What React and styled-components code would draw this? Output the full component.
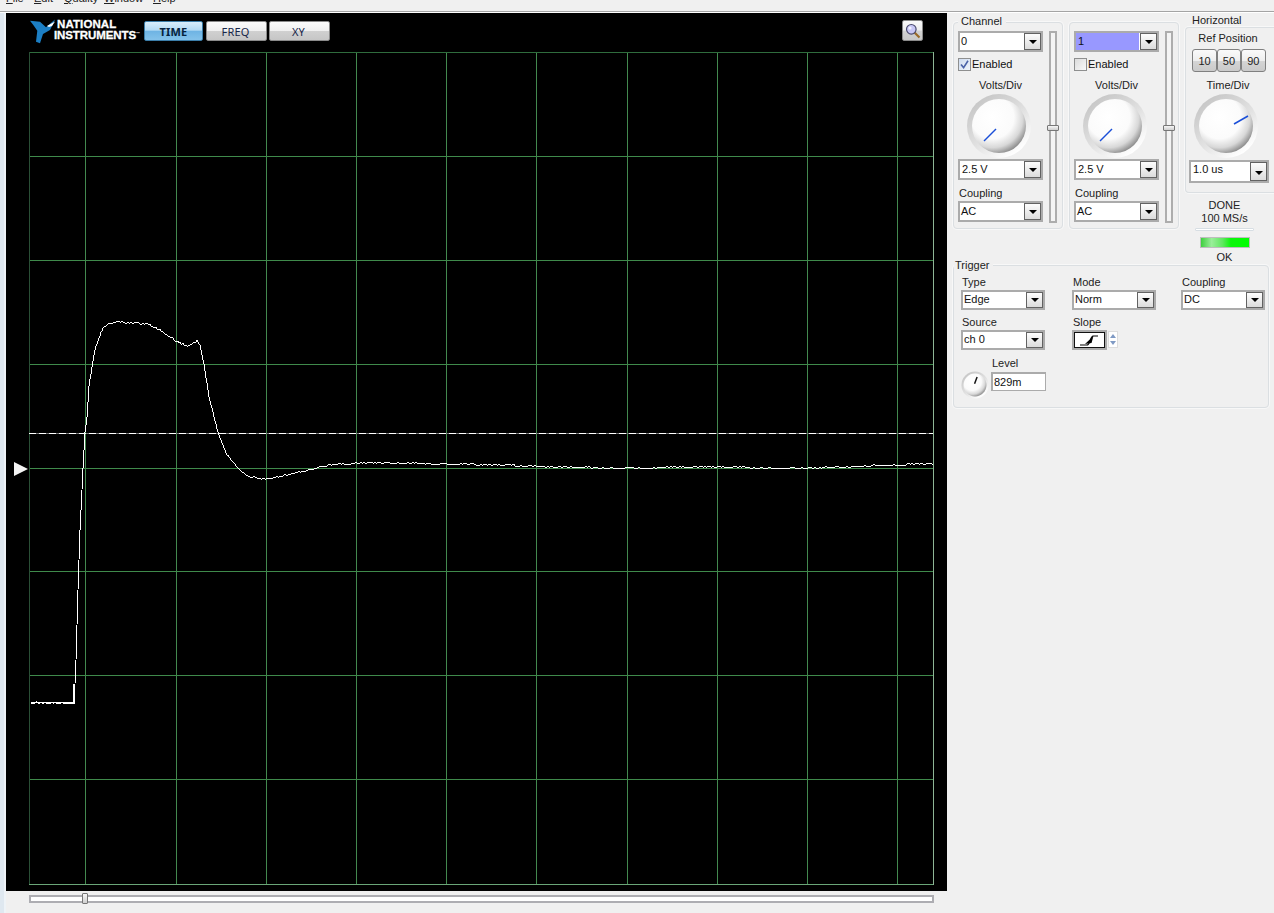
import React from "react";
import styled, { createGlobalStyle } from "styled-components";

const Global = createGlobalStyle`
  html, body { margin: 0; padding: 0; background: #f0f0f0; overflow: hidden; }
  #root { width: 1274px; height: 913px; }
  * { box-sizing: border-box; }
`;

const Page = styled.div`
  width: 1274px; height: 913px; overflow: hidden; display: flex; flex-direction: column;
  font-family: "Liberation Sans", Arial, sans-serif; font-size: 11px; color: #111; background: #f0f0f0;
`;
const MenuBar = styled.div`
  height: 13px; flex: none; overflow: hidden; display: flex; padding-left: 6px;
  border-bottom: 1px solid #fff; box-shadow: inset 0 -1px 0 #a4a4a4; background: #f0f0f0;
`;
const MenuItem = styled.span`
  width: ${p => p.$w}px; margin-top: -9px; line-height: 15px; height: 15px; font-size: 11px; color: #222; flex: none;
  &::first-letter { text-decoration: underline; }
`;
const Body = styled.div`display: flex; flex: 1; min-height: 0;`;
const Strip = styled.div`width: 6px; flex: none; background: linear-gradient(90deg, #dfe8f0 0 4px, #eef3f7 4px);`;
const LeftColumn = styled.div`width: 941px; flex: none; display: flex; flex-direction: column;`;
const Scope = styled.div`height: 878px; background: #000; display: flex; flex-direction: column;`;
const Toolbar = styled.div`height: 39px; flex: none; display: flex; align-items: flex-start; padding: 8px 24px 0 24px;`;
const Logo = styled.div`width: 114px; height: 24px; flex: none; position: relative; margin-top: -2px; display: flex; padding-left: 24px;`;
const LogoMark = styled.svg`position: absolute; left: 0; top: 0;`;
const LogoText = styled.div`
  color: #fff; font-family: "Liberation Sans", Arial, sans-serif; font-weight: 700; line-height: 10px; white-space: nowrap;
`;
const LogoLine = styled.div`
  font-size: ${p => p.$s}px; letter-spacing: ${p => p.$ls}px; margin-left: ${p => p.$ml || 0}px; -webkit-text-stroke: 0.3px #fff;
  & sup { font-size: 4px; vertical-align: 4px; letter-spacing: 0; -webkit-text-stroke: 0; }
`;
const TabButton = styled.div`
  width: ${p => p.$w}px; height: 20px; flex: none; margin-right: ${p => p.$mr}px; display: flex; align-items: center; justify-content: center;
  border-radius: 2px; font-family: "Noto Sans", sans-serif; font-size: 11px; letter-spacing: 0.2px;
  padding: 1px ${p => (p.$active ? 0 : 2)}px 0 0;
  border: 1px solid ${p => (p.$active ? "#3b7da8" : "#8a8a8a")};
  color: ${p => (p.$active ? "#06223c" : "#17264a")};
  font-weight: ${p => (p.$active ? 700 : 400)};
  background: ${p => (p.$active
    ? "linear-gradient(180deg, #d9eefb 0%, #b3daf3 45%, #6fb4e4 52%, #84c2ea 100%)"
    : "linear-gradient(180deg, #fbfbfb 0%, #f0f0f0 48%, #d0d0d0 52%, #c6c6c6 100%)")};
`;
const ZoomButton = styled.div`
  width: 21px; height: 21px; margin-left: auto; margin-top: -1px; border: 1px solid #8a8a8a; border-radius: 2px;
  background: linear-gradient(180deg, #fafafa 0%, #eee 48%, #d2d2d2 52%, #c8c8c8 100%);
  display: flex; align-items: center; justify-content: center;
`;
const PlotSvg = styled.svg`display: block; flex: none;`;
const BottomBar = styled.div`height: 22px; flex: none; padding: 4px 13px 0 23px;`;
const HTrack = styled.div`
  position: relative; height: 8px; border: 2px solid #adadb2; background: #fff;
`;
const HThumb = styled.div`
  position: absolute; left: 51px; top: -4px; width: 6px; height: 11px; border: 1px solid #777; border-radius: 1px;
  background: linear-gradient(180deg, #f6f6f6, #cfcfcf);
`;
const Side = styled.div`width: 327px; flex: none; padding-left: 6px; display: flex; flex-direction: column;`;
const TopRow = styled.div`display: flex; gap: 6px; height: 251px; flex: none;`;
const Group = styled.div`
  position: relative; width: 110px; height: 207px; margin-top: 9px; flex: none; display: flex; gap: 6px;
  padding: 8px 0 0 4px; border: 1px solid #dbdfe2; border-radius: 4px; box-shadow: 0 0 0 1px #f8f8f8;
`;
const Legend = styled.span`
  position: absolute; left: ${p => p.$l}px; top: ${p => p.$t ?? -8}px; line-height: 13px; padding: 0 4px 0 ${p => p.$pl ?? 3}px; background: #f0f0f0; color: #222;
`;
const GroupColumn = styled.div`width: 85px; flex: none; display: flex; flex-direction: column;`;
const VTrack = styled.div`
  position: relative; width: 8px; height: 192px; flex: none; border: 2px solid #adadad; background: #f4f4f4;
`;
const VThumb = styled.div`
  position: absolute; left: -4px; top: 92px; width: 12px; height: 6px; border: 1px solid #777; border-radius: 1px;
  background: linear-gradient(180deg, #f6f6f6, #cfcfcf);
`;
const DropBox = styled.div`
  width: ${p => p.$w}px; height: ${p => p.$h}px; flex: none; display: flex; align-items: stretch; justify-content: space-between;
  margin-left: ${p => p.$ml || 0}px;
  border: 2px solid #ababab; background: #fff; font-size: 11px; line-height: 1; color: #111;
`;
const DropValue = styled.div`
  flex: 1; display: flex; align-items: center; padding: 0 0 ${p => p.$pb ?? 1}px ${p => p.$pl ?? 0}px; margin-right: 1px; background: ${p => p.$hl ? "#9898ff" : "#fff"};
`;
const DropArrow = styled.div`
  width: 17px; flex: none; display: flex; align-items: flex-end; justify-content: center; padding-bottom: 5px;
  border: 1px solid #626262; background: linear-gradient(180deg, #fdfdfd 0%, #dcdcdc 100%);
  &::after { content: ""; border-left: 4px solid transparent; border-right: 4px solid transparent; border-top: 4px solid #000; }
`;
const CheckRow = styled.div`height: 13px; margin-top: 6px; display: flex; align-items: center; gap: 1px; line-height: 13px;`;
const CheckBox = styled.div`
  width: 13px; height: 13px; flex: none; border: 1px solid #8e8f8f; outline: 0;
  background: ${p => p.$on ? "linear-gradient(135deg, #cfdcf0, #eef3fa)" : "linear-gradient(135deg, #dcdcdc, #f8f8f8)"};
  display: flex; align-items: center; justify-content: center;
`;
const CenterLabel = styled.div`height: 14px; line-height: 14px; margin-top: ${p => p.$mt}px; text-align: center; color: #222;`;
const PlainLabel = styled.div`height: 15px; line-height: 14px; margin-top: ${p => p.$mt || 0}px; margin-left: ${p => p.$ml || 0}px; color: #222;`;
const KnobFrame = styled.div`
  height: ${p => p.$h ?? 66}px; flex: none; display: flex; justify-content: center; align-self: ${p => p.$self || "stretch"};
  margin: ${p => p.$mt || 0}px ${p => p.$mr || 0}px ${p => p.$mb || 0}px 0;
`;
const HorizontalColumn = styled.div`width: 89px; flex: none; display: flex; flex-direction: column;`;
const HorizontalTitle = styled.div`height: 14px; line-height: 15px; padding-left: 7px; color: #222; flex: none;`;
const HBox = styled.div`
  height: 166px; flex: none; padding: 4px 4px 0 0; display: flex; flex-direction: column; align-items: center;
  border: 1px solid #dbdfe2; border-right: 0; border-radius: 4px 0 0 4px; box-shadow: 0 0 0 1px #f8f8f8;
`;
const RefButtons = styled.div`display: flex; margin-top: 4px; margin-left: 2px;`;
const RefButton = styled.div`
  width: 24.4px; height: 23px; border: 1px solid #808080; border-radius: 3px; display: flex; align-items: center; justify-content: center;
  background: linear-gradient(180deg, #fafafa 0%, #eee 50%, #d4d4d4 55%, #cacaca 100%); font-size: 11px; color: #222;
`;
const Status = styled.div`display: flex; flex-direction: column; align-items: center; padding: 6px 10px 0 0; text-align: center; line-height: 13px; color: #222;`;
const ThinBar = styled.div`width: 59px; height: 3px; margin-top: 3px; border: 1px solid #d7dee3; background: #fff; border-radius: 1px;`;
const Led = styled.div`
  width: 50px; height: 11px; margin-top: 6px; border: 1px solid #bdbdbd;
  background: linear-gradient(90deg, #3fcf3f 0%, #9aee9a 22%, #5fe85f 45%, #0cf50c 62%, #00ff00 100%);
`;
const OkText = styled.div`margin-top: 2px; line-height: 14px;`;
const Trigger = styled.div`
  position: relative; width: 316px; height: 143px; margin-top: 1px; flex: none; padding: 9px 0 0 7px;
  display: grid; grid-template-columns: 111px 109px 84px; grid-auto-rows: 35px 35px 44px; row-gap: 5px;
  border: 1px solid #dbdfe2; border-radius: 4px; box-shadow: 0 0 0 1px #f8f8f8;
`;
const Field = styled.div`display: flex; flex-direction: column;`;
const SlopeRow = styled.div`display: flex; align-items: flex-start; gap: 1px;`;
const SlopeBox = styled.div`
  width: 35px; height: 20px; border: 2px solid #ababab; background: #fff; flex: none;
  display: flex; align-items: stretch;
`;
const SlopeInner = styled.div`flex: 1; border: 1px solid #111; display: flex; align-items: center; justify-content: center;`;
const Spinner = styled.div`width: 10px; height: 17px; display: flex; flex-direction: column; border: 1px solid #ddd; background: #fff; margin-top: 1px;`;
const SpinPart = styled.div`
  flex: 1; display: flex; align-items: center; justify-content: center;
  &::after { content: ""; border-left: 3px solid transparent; border-right: 3px solid transparent;
    ${p => p.$down ? "border-top: 4px solid #7f9ac4;" : "border-bottom: 4px solid #7f9ac4;"} }
`;
const LevelRow = styled.div`grid-column: 1 / 3; display: flex; gap: 2px; height: 44px;`;
const LevelColumn = styled.div`display: flex; flex-direction: column; align-items: flex-start;`;
const LevelLabel = styled.div`height: 16px; padding-top: 1px; line-height: 14px; margin-left: 1px; color: #222;`;
const NumBox = styled.div`
  width: 55px; height: 19px; margin-top: 1px; border: 1px solid #ababab; border-width: 2px 1px 1px 2px; background: #fff; padding-left: 1px; display: flex; align-items: center; font-size: 11px;
`;

function Dropdown({ value, w = 85, h = 21, hl, pl, ml, pb }) {
  return (
    <DropBox $w={w} $h={h} $ml={ml}>
      <DropValue $hl={hl} $pl={pl} $pb={pb}>{value}</DropValue>
      <DropArrow />
    </DropBox>
  );
}

let knobId = 0;
function Knob({ size = 66, needle, color = "#1a4fd8", weight = 1.5 }) {
  const id = React.useMemo(() => `k${knobId++}`, []);
  return (
    <svg width={size} height={size} viewBox="0 0 66 66">
      <defs>
        <radialGradient id={`${id}s`} cx="38%" cy="34%" r="72%">
          <stop offset="0" stopColor="#ffffff" />
          <stop offset="0.55" stopColor="#fbfbfb" />
          <stop offset="0.78" stopColor="#d8d8d8" />
          <stop offset="1" stopColor="#7e7e7e" />
        </radialGradient>
        <linearGradient id={`${id}r`} x1="0.2" y1="0.1" x2="0.8" y2="0.9">
          <stop offset="0" stopColor="#c8c8c8" />
          <stop offset="0.55" stopColor="#e2e2e2" />
          <stop offset="1" stopColor="#ffffff" />
        </linearGradient>
      </defs>
      <circle cx="33" cy="33" r="32" fill={`url(#${id}r)`} />
      <circle cx="33" cy="33" r="27" fill={`url(#${id}s)`} />
      <line x1={needle[0]} y1={needle[1]} x2={needle[2]} y2={needle[3]} stroke={color} strokeWidth={weight} />
    </svg>
  );
}

const rawTrace = [
  [75,684],[76,660],[78,590],[80,530],[82,490],[83,468],[85,432],[87,417],[89,387],[92,367],[95,350],[99,338],[103,328],[110,323],[117,322],
  [132,323],[147,324],[160,330],[177,342],[187,346],[197,341],[200,345],[204,365],[209,397],[218,433],[227,455],[238,468],[247,476],[263,479],[277,477],[300,472],
  [330,465],[360,463],[400,463],[450,464],[500,465],[560,467],[620,468],[700,467],[800,468],[845,467],[880,465],[933,464],
];
const jitterAt = x => {
  const noise = Math.sin(x * 12.9898) * 43758.5453;
  return noise - Math.floor(noise) > 0.78 ? -1 : 0;
};
function buildFlat() {
  const flat = [];
  for (let x = 31; x <= 73; x++) flat.push(`${x},${703 + jitterAt(x)}`);
  return [...flat, "74,703", "74,684"].join(" ");
}
function buildRise() {
  const pts = ["74,684"];
  let idx = 0;
  for (let x = 75; x <= 933; x++) {
    while (idx < rawTrace.length - 2 && rawTrace[idx + 1][0] <= x) idx++;
    const [x0, y0] = rawTrace[idx];
    const [x1, y1] = rawTrace[idx + 1];
    const base = y0 + ((y1 - y0) * (x - x0)) / (x1 - x0);
    pts.push(`${x},${Math.round(base) + jitterAt(x)}`);
  }
  return pts.join(" ");
}
const flatPoints = buildFlat();
const risePoints = buildRise();

const vLines = [85, 176, 266, 356, 446, 536, 627, 717, 807, 897];
const hLines = [156, 260, 364, 468, 571, 675, 779];

function Plot() {
  return (
    <PlotSvg width="941" height="839" viewBox="6 52 941 839" shapeRendering="crispEdges">
      <rect x="6" y="52" width="941" height="839" fill="#000" />
      {vLines.map(x => <line key={x} x1={x + 0.5} y1="52" x2={x + 0.5} y2="885" stroke="#43894f" />)}
      {hLines.map(y => <line key={y} x1="29" y1={y + 0.5} x2="934" y2={y + 0.5} stroke="#3f8a4b" />)}
      <line x1="29" y1="52.5" x2="934" y2="52.5" stroke="#2f6c3d" />
      <line x1="29.5" y1="52" x2="29.5" y2="885" stroke="#2a4f36" />
      <line x1="29" y1="884.5" x2="934" y2="884.5" stroke="#6aa678" />
      <line x1="933.5" y1="52" x2="933.5" y2="885" stroke="#8db595" />
      <line x1="29" y1="433.5" x2="933" y2="433.5" stroke="#707070" />
      <line x1="29" y1="433.5" x2="933" y2="433.5" stroke="#ffffff" strokeDasharray="7 3" />
      <polyline points={flatPoints} fill="none" stroke="#ffffff" strokeWidth="1.3" />
      <polyline points={risePoints} fill="none" stroke="#ffffff" strokeWidth="1" />
      <polygon points="14,462 14,476 28,469" fill="#f4f4f4" shapeRendering="auto" />
    </PlotSvg>
  );
}

function TopChannel({ legend, value, hl, enabled, needle }) {
  return (
    <Group>
      {legend && <Legend $l={4}>{legend}</Legend>}
      <GroupColumn>
        <Dropdown value={value} hl={hl} pl={hl ? 2 : 1} />
        <CheckRow>
          <CheckBox $on={enabled}>
            {enabled && (
              <svg width="11" height="11" viewBox="0 0 11 11">
                <path d="M2 5.5 L4.6 8.6 L9 1.8" fill="none" stroke="#4a62a8" strokeWidth="1.6" />
              </svg>
            )}
          </CheckBox>
          <span>Enabled</span>
        </CheckRow>
        <CenterLabel $mt={7}>Volts/Div</CenterLabel>
        <KnobFrame $mt={1} $mr={4}><Knob needle={needle} /></KnobFrame>
        <Dropdown value="2.5 V" pl={2} />
        <PlainLabel $mt={6} $ml={1}>Coupling</PlainLabel>
        <Dropdown value="AC" pl={1} h={21} />
      </GroupColumn>
      <VTrack><VThumb /></VTrack>
    </Group>
  );
}

export default function App() {
  return (
    <Page>
      <Global />
      <MenuBar>
        <MenuItem $w={28}>File</MenuItem>
        <MenuItem $w={30}>Edit</MenuItem>
        <MenuItem $w={40}>Quality</MenuItem>
        <MenuItem $w={49}>Window</MenuItem>
        <MenuItem $w={40}>Help</MenuItem>
      </MenuBar>
      <Body>
        <Strip />
        <LeftColumn>
          <Scope>
            <Toolbar>
              <Logo>
                <LogoMark width="30" height="28" viewBox="0 0 30 28">
                  <path d="M0 1.7 L10 2.7 L16 8.3 L25 0.6 L23 5 L20 11 L13 15 L10 24.3 L6 22.7 L7.3 11.7 L3.3 6 Z" fill="#1c7fc4" />
                  <path d="M17 7 L25 2.5 L22 7 L19 8 Z" fill="#ffffff" />
                </LogoMark>
                <LogoText>
                  <LogoLine $s={11.5} $ls={0.1} $ml={3}>NATIONAL</LogoLine>
                  <LogoLine $s={11.5} $ls={-0.1}>INSTRUMENTS<sup>™</sup></LogoLine>
                </LogoText>
              </Logo>
              <TabButton $w={59} $mr={3} $active>TIME</TabButton>
              <TabButton $w={61} $mr={2}>FREQ</TabButton>
              <TabButton $w={61} $mr={0}>XY</TabButton>
              <ZoomButton>
                <svg width="16" height="16" viewBox="0 0 16 16">
                  <line x1="9.5" y1="9.5" x2="14.5" y2="14.5" stroke="#9a6a28" strokeWidth="2.2" />
                  <circle cx="6.3" cy="6.3" r="4.8" fill="#c9c8f6" stroke="#4b4b6e" strokeWidth="1.2" />
                  <circle cx="5" cy="5" r="1.6" fill="#f2f2ff" />
                </svg>
              </ZoomButton>
            </Toolbar>
            <Plot />
          </Scope>
          <BottomBar>
            <HTrack><HThumb /></HTrack>
          </BottomBar>
        </LeftColumn>
        <Side>
          <TopRow>
            <TopChannel legend="Channel" value="0" enabled needle={[30, 36, 18, 48]} />
            <TopChannel value="1" hl needle={[30, 36, 18, 48]} />
            <HorizontalColumn>
              <HorizontalTitle>Horizontal</HorizontalTitle>
              <HBox>
                <CenterLabel $mt={-1}>Ref Position</CenterLabel>
                <RefButtons>
                  <RefButton>10</RefButton>
                  <RefButton>50</RefButton>
                  <RefButton>90</RefButton>
                </RefButtons>
                <CenterLabel $mt={6}>Time/Div</CenterLabel>
                <KnobFrame $self="center" $mt={1} $mr={4} $mb={1}><Knob needle={[41, 31, 55, 23]} /></KnobFrame>
                <Dropdown value="1.0 us" w={80} h={23} pl={2} ml={2} pb={4} />
              </HBox>
              <Status>
                <span>DONE</span>
                <span>100 MS/s</span>
                <ThinBar />
                <Led />
                <OkText>OK</OkText>
              </Status>
            </HorizontalColumn>
          </TopRow>
          <Trigger>
            <Legend $l={0} $pl={1} $t={-7}>Trigger</Legend>
            <Field>
              <PlainLabel $ml={1}>Type</PlainLabel>
              <Dropdown value="Edge" w={84} h={20} pl={1} />
            </Field>
            <Field>
              <PlainLabel $ml={1}>Mode</PlainLabel>
              <Dropdown value="Norm" w={84} h={20} pl={1} />
            </Field>
            <Field>
              <PlainLabel $ml={1}>Coupling</PlainLabel>
              <Dropdown value="DC" w={84} h={20} pl={1} />
            </Field>
            <Field>
              <PlainLabel $ml={1}>Source</PlainLabel>
              <Dropdown value="ch 0" w={84} h={20} pl={1} />
            </Field>
            <Field>
              <PlainLabel $ml={1}>Slope</PlainLabel>
              <SlopeRow>
                <SlopeBox>
                  <SlopeInner>
                    <svg width="27" height="14" viewBox="0 0 27 14">
                      <path d="M4 12 H11 C14 12 14 4 17 3 H22" fill="none" stroke="#000" strokeWidth="1.2" />
                      <path d="M9 11 L17.5 3 L15.5 10 Z" fill="#000" />
                    </svg>
                  </SlopeInner>
                </SlopeBox>
                <Spinner>
                  <SpinPart />
                  <SpinPart $down />
                </Spinner>
              </SlopeRow>
            </Field>
            <span />
            <LevelRow>
              <KnobFrame $h={28} $self="flex-end"><Knob size={28} needle={[32, 30, 38, 14]} color="#111" weight={3.5} /></KnobFrame>
              <LevelColumn>
                <LevelLabel>Level</LevelLabel>
                <NumBox>829m</NumBox>
              </LevelColumn>
            </LevelRow>
          </Trigger>
        </Side>
      </Body>
    </Page>
  );
}
